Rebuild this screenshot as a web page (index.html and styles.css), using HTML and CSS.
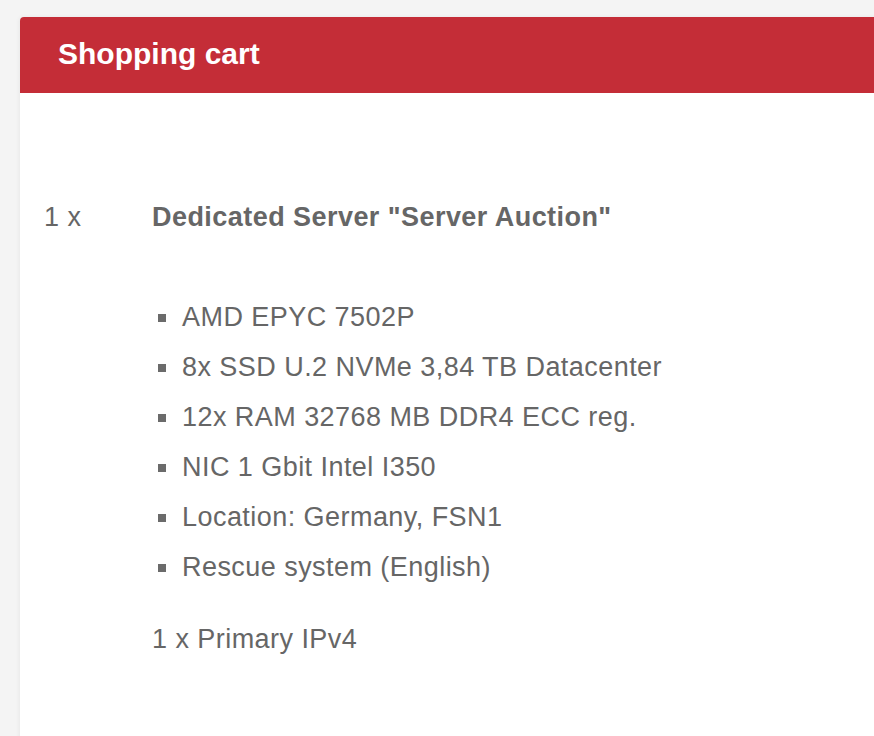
FILE: index.html
```html
<!DOCTYPE html>
<html lang="en">
<head>
<meta charset="utf-8">
<title>Shopping cart</title>
<link rel="stylesheet" href="styles.css">
</head>
<body>
<div class="card">
  <div class="card-header">Shopping cart</div>
  <div class="card-body">
    <div class="cart-row">
      <div class="qty">1 x</div>
      <div class="desc">
        <div class="product">Dedicated Server "Server Auction"</div>
        <ul class="specs">
          <li>AMD EPYC 7502P</li>
          <li>8x SSD U.2 NVMe 3,84 TB Datacenter</li>
          <li>12x RAM 32768 MB DDR4 ECC reg.</li>
          <li>NIC 1 Gbit Intel I350</li>
          <li>Location: Germany, FSN1</li>
          <li>Rescue system (English)</li>
        </ul>
        <div class="addon">1 x Primary IPv4</div>
      </div>
    </div>
  </div>
</div>
</body>
</html>
```
FILE: styles.css
```css
html, body {
  margin: 0;
  padding: 0;
  background: #f4f4f4;
  overflow: hidden;
}
body {
  padding: 17px 0 0 20px;
  font-family: "Liberation Sans", Arial, Helvetica, sans-serif;
  color: #666666;
}
.card {
  width: 1000px;
  min-height: 760px;
  background: #ffffff;
  border-radius: 4px 0 0 0;
  box-shadow: -1px 0 4px rgba(0, 0, 0, 0.05);
}
.card-header {
  height: 76px;
  line-height: 73px;
  padding-left: 38px;
  background: #c42d37;
  border-radius: 4px 0 0 0;
  color: #ffffff;
  font-weight: bold;
  font-size: 30px;
}
.card-body {
  padding: 109px 0 0 24px;
}
.cart-row {
  display: grid;
  grid-template-columns: 108px 1fr;
  font-size: 27px;
  letter-spacing: 0.45px;
  line-height: 30px;
}
.product {
  font-weight: bold;
}
.specs {
  list-style: none;
  margin: 60px 0 0 0;
  padding: 0;
  line-height: 50px;
}
.specs li {
  padding-left: 6px;
}
.specs li::before {
  content: "";
  display: inline-block;
  width: 8px;
  height: 8px;
  margin-right: 16px;
  background: #6b6b6b;
  vertical-align: 4px;
}
.addon {
  margin-top: 32px;
}
```
